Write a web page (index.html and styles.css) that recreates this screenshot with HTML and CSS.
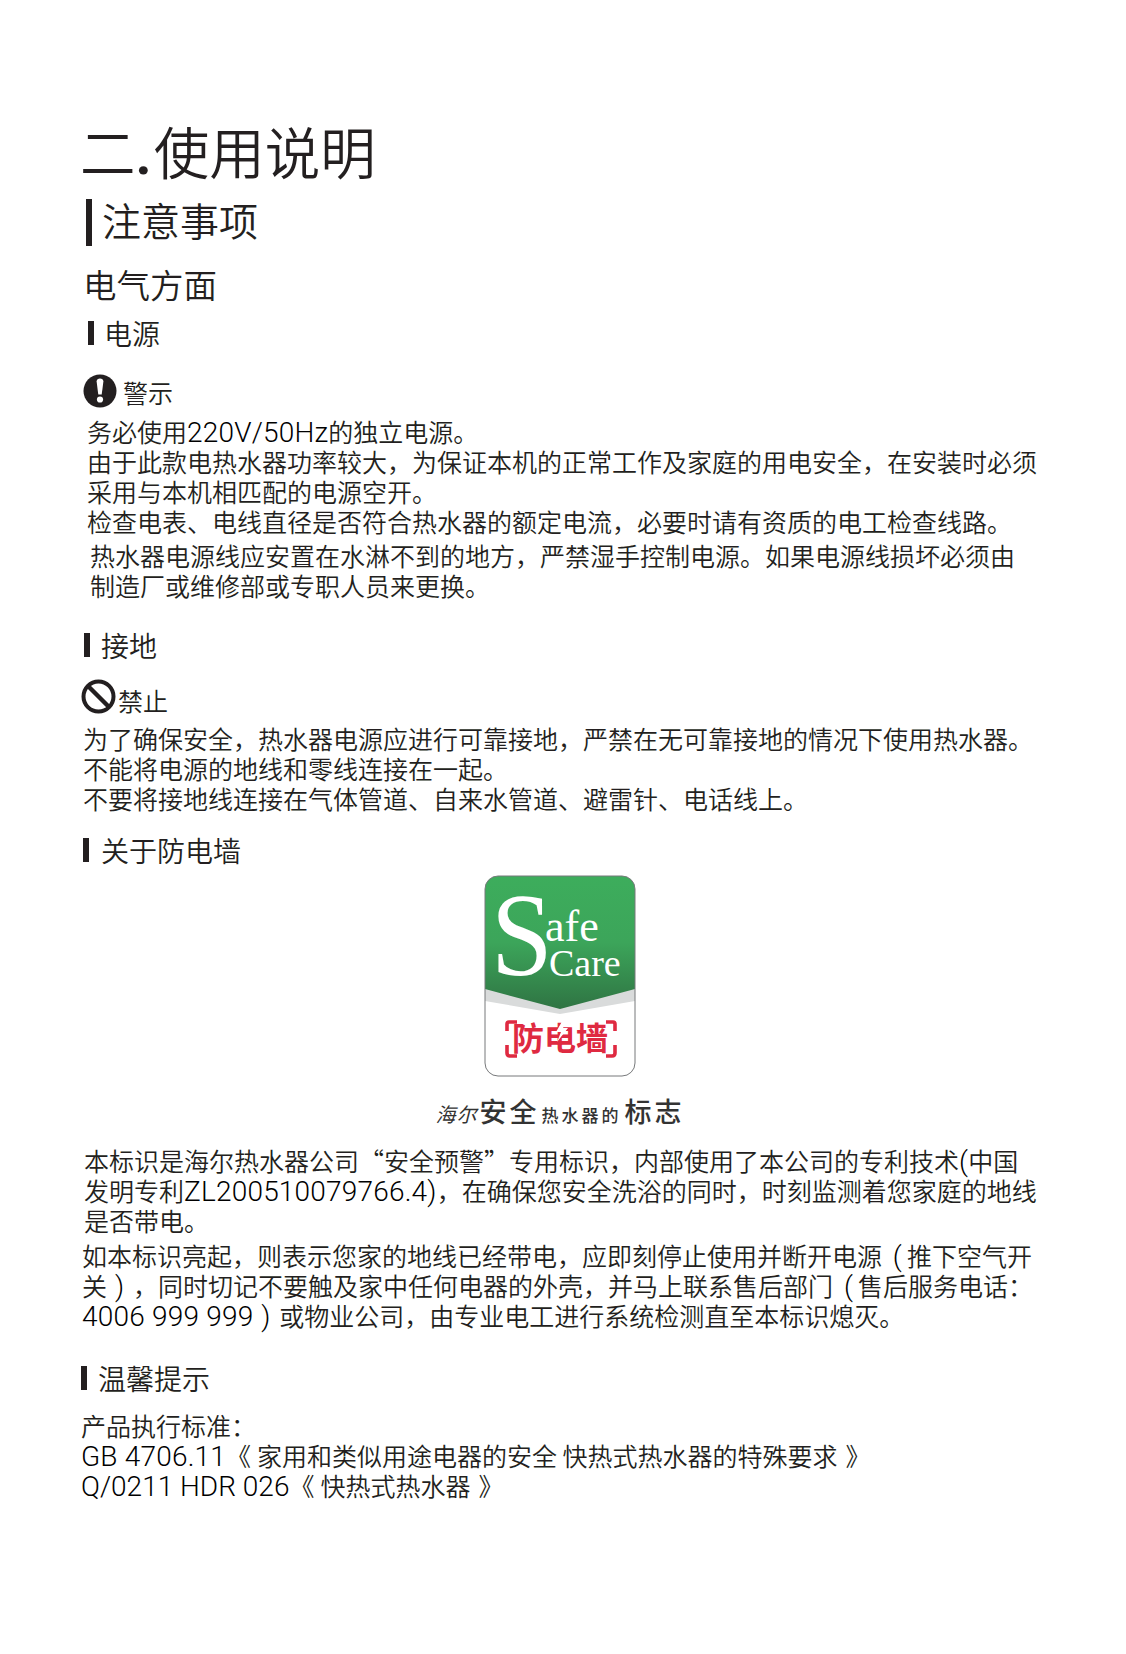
FILE: index.html
```html
<!DOCTYPE html>
<html lang="zh-CN">
<head>
<meta charset="utf-8">
<title>使用说明</title>
<link rel="stylesheet" href="styles.css">
</head>
<body>
<main class="page">
  <h1 class="title">二<span class="dot">.</span>使用说明</h1>
  <h2 class="section"><span class="bar bar-lg"></span>注意事项</h2>
  <h3 class="sub">电气方面</h3>
  <h4 class="head head-power"><span class="bar"></span>电源</h4>
  <div class="notice notice-warn">
    <svg class="icon" viewBox="0 0 34 34"><circle cx="17" cy="17" r="16.500" fill="#231f20"/><path d="M13.600 7.500c0-1.800 1.500-3 3.400-3s3.400 1.200 3.400 3L18.700 20.500h-3.400z" fill="#fff"/><circle cx="17" cy="25.500" r="3.100" fill="#fff"/></svg>
    <span>警示</span>
  </div>
  <p class="text p-power1">务必使用<span class="lat">220V/50Hz</span>的独立电源。<br>由于此款电热水器功率较大，为保证本机的正常工作及家庭的用电安全，在安装时必须<br>采用与本机相匹配的电源空开。<br>检查电表、电线直径是否符合热水器的额定电流，必要时请有资质的电工检查线路。</p>
  <p class="text p-power2">热水器电源线应安置在水淋不到的地方，严禁湿手控制电源。如果电源线损坏必须由<br>制造厂或维修部或专职人员来更换。</p>
  <h4 class="head head-ground"><span class="bar"></span>接地</h4>
  <div class="notice notice-ban">
    <svg class="icon icon-ban" viewBox="0 0 35 35"><circle cx="17.500" cy="17.500" r="15" fill="none" stroke="#231f20" stroke-width="4"/><path d="M7 7l21 21" stroke="#231f20" stroke-width="4.400" fill="none"/></svg>
    <span>禁止</span>
  </div>
  <p class="text p-ground">为了确保安全，热水器电源应进行可靠接地，严禁在无可靠接地的情况下使用热水器。<br>不能将电源的地线和零线连接在一起。<br>不要将接地线连接在气体管道、自来水管道、避雷针、电话线上。</p>
  <h4 class="head head-wall"><span class="bar"></span>关于防电墙</h4>
  <figure class="figure">
    <svg class="logo" viewBox="0 0 152 202" role="img" aria-label="Safe Care 防电墙">
      <defs>
        <linearGradient id="green" x1="0" y1="0" x2="0" y2="1">
          <stop offset="0" stop-color="#3dad5c"/>
          <stop offset=".5" stop-color="#3ca55a"/>
          <stop offset="1" stop-color="#2f7443"/>
        </linearGradient>
      </defs>
      <rect x="1" y="1" width="150" height="200" rx="13" fill="#fff"/>
      <path d="M1 114V126L76 139L151 126V114z" fill="#d9dbdb"/>
      <path d="M14 1H138A13 13 0 0 1 151 14V114L76 134L1 114V14A13 13 0 0 1 14 1z" fill="url(#green)"/>
      <rect x="1" y="1" width="150" height="200" rx="13" fill="none" stroke="#77797b" stroke-width="1"/>
      <text class="logo-s" transform="translate(7 100) scale(.94 1)">S</text>
      <text class="logo-afe" x="61" y="66">afe</text>
      <text class="logo-care" x="65" y="101">Care</text>
      <path d="M23 156V149Q23 147 25 147H33M23 170V178Q23 181 26 181H33M122 147H129Q131 147 131 149V156M131 170V178Q131 181 128 181H122" fill="none" stroke="#df2a41" stroke-width="3.600"/>
      <text class="logo-wall" x="28" y="175">防电墙</text>
      <path d="M80 143L72 157H77L73 167L84 153H79L84 143z" fill="#fff"/>
    </svg>
    <figcaption class="caption"><span class="cap-brand">海尔</span><span class="cap-lg">安全</span><span class="cap-sm">热水器的</span><span class="cap-lg">标志</span></figcaption>
  </figure>
  <p class="text p-wall1">本标识是海尔热水器公司<span class="quote">“</span>安全预警<span class="quote">”</span>专用标识，内部使用了本公司的专利技术<span class="lat">(</span>中国<br>发明专利<span class="lat">ZL200510079766.4)</span>，在确保您安全洗浴的同时，时刻监测着您家庭的地线<br>是否带电。</p>
  <p class="text p-wall2">如本标识亮起，则表示您家的地线已经带电，应即刻停止使用并断开电源<span class="lat po">(</span>推下空气开<br>关<span class="lat pc">)</span>，同时切记不要触及家中任何电器的外壳，并马上联系售后部门<span class="lat po">(</span>售后服务电话：<br><span class="lat">4006 999 999</span><span class="lat pc">)</span>或物业公司，由专业电工进行系统检测直至本标识熄灭。</p>
  <h4 class="head head-tips"><span class="bar"></span>温馨提示</h4>
  <p class="text p-tips">产品执行标准：<br><span class="lat">GB 4706.11</span><span class="bo">《</span>家用和类似用途电器的安全 快热式热水器的特殊要求<span class="bc">》</span><br><span class="lat lat-tight">Q/0211 HDR 026</span><span class="bo">《</span>快热式热水器<span class="bc">》</span></p>
</main>
</body>
</html>
```
FILE: styles.css
```css
* { box-sizing: border-box; }
html, body { margin: 0; background: #fff; }
body {
  color: #231f20;
  font-family: "Noto Sans CJK SC", sans-serif;
  font-weight: 350;
}
.page {
  width: 1126px;
  height: 1654px;
  padding-top: 120px;
  overflow: hidden;
}
h1, h2, h3, h4, p, figure { margin: 0; font-weight: inherit; }

.title { font-size: 55.500px; line-height: 60px; margin-left: 80px; white-space: nowrap; }
.dot { font-family: "Roboto", sans-serif; font-weight: 700; margin-right: 2px; line-height: 0; }
.section {
  display: flex; align-items: center; gap: 10px;
  font-size: 39px; height: 47px; line-height: 47px;
  margin: 19px 0 0 86px;
  padding-bottom: 6px;
}
.sub { font-size: 33.500px; line-height: 40px; margin: 18px 0 0 83px; padding-bottom: 2px; }
.head {
  display: flex; align-items: center; gap: 10px;
  font-size: 28px; line-height: 30px; height: 30px;
  padding-bottom: 2px;
}
.bar { display: block; width: 6px; height: 24px; background: #231f20; flex: none; }
.bar-lg { height: 47px; align-self: flex-start; }
.head-power { margin: 13px 0 0 88px; }
.head-ground { margin: 31px 0 0 84px; gap: 11px; }
.head-wall { margin: 23px 0 0 83px; gap: 12px; }
.head-tips { margin: 34px 0 0 81px; gap: 11px; }

.notice { display: flex; align-items: center; font-size: 25px; }
.icon { display: block; width: 34px; height: 34px; flex: none; }
.icon-ban { width: 35px; height: 35px; }
.notice-warn { margin: 25px 0 0 83px; gap: 6px; height: 33px; }
.notice-warn span { padding-top: 2px; }
.notice-ban { margin: 18px 0 0 81px; gap: 2px; height: 35px; }
.notice-ban span { padding-top: 6px; }

.text { font-size: 25px; line-height: 30px; white-space: nowrap; }
.lat { font-family: "Roboto", sans-serif; font-weight: 300; font-size: 28px; line-height: 0; letter-spacing: .2px; color: #000; }
.lat-tight { letter-spacing: 0; }
.quote { display: inline-block; width: 25px; text-align: center; }
.po { display: inline-block; width: 25px; text-align: right; padding-right: 5px; }
.pc { display: inline-block; width: 26px; text-align: left; padding-left: 8px; }
.bo { display: inline-block; width: 31px; text-align: right; padding-right: 7px; }
.bc { display: inline-block; width: 33px; text-align: right; }
.p-power1 { margin: 9px 0 0 87px; }
.p-power2 { margin: 4px 0 0 90px; }
.p-ground { margin: 9px 0 0 83px; }
.p-wall1 { margin: 19px 0 0 84px; }
.p-wall2 { margin: 5px 0 0 82px; }
.p-tips { margin: 16px 0 0 81px; }

.figure { margin-top: 9px; padding-right: 6px; display: flex; flex-direction: column; align-items: center; }
.logo { display: block; width: 152px; height: 202px; }
.logo-s { font-family: "Liberation Serif", serif; font-size: 118px; fill: #fff; }
.logo-afe { font-family: "Liberation Serif", serif; font-size: 44px; fill: #fff; }
.logo-care { font-family: "Liberation Serif", serif; font-size: 38px; fill: #fff; }
.logo-wall { font-family: "Noto Sans CJK SC", sans-serif; font-size: 32px; font-weight: 700; fill: #df2a41; }

.caption {
  display: flex; align-items: baseline; height: 30px; line-height: 30px;
  margin-top: 19px; color: #333; font-weight: 500; white-space: nowrap;
}
.cap-brand { font-size: 20px; font-style: italic; font-weight: 400; margin-right: 2px; letter-spacing: 1px; }
.cap-lg { font-size: 27px; letter-spacing: 3px; }
.cap-sm { font-size: 17px; letter-spacing: 3px; margin: 0 3px 0 2px; }
```
